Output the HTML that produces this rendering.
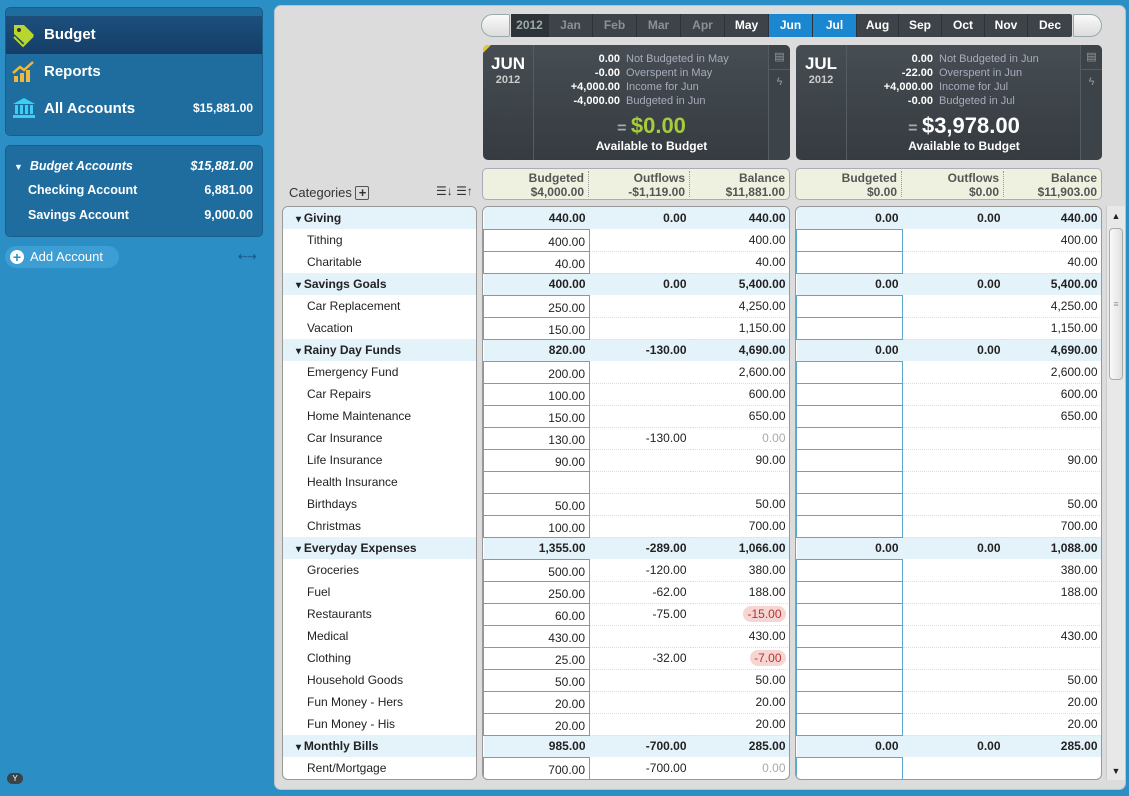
<!DOCTYPE html>
<html><head><meta charset="utf-8"><style>
*{box-sizing:border-box;margin:0;padding:0}
body{width:1129px;height:796px;overflow:hidden;background:#2b8fc5;font-family:"Liberation Sans",sans-serif;font-size:12px;color:#222;position:relative}
.abs{position:absolute}
.side1{left:5px;top:7px;width:258px;height:129px;background:#1f6d9f;border-radius:5px;border:1px solid #1a5f8c}
.nav{position:absolute;left:0;width:256px;height:37px;color:#fff;font-weight:bold;font-size:15px;line-height:37px;padding-left:38px}
.nav.sel{background:linear-gradient(#1d4f7d,#143e66);top:8px;height:38px}
.nav .amt{position:absolute;right:9px;font-size:12px}
.side2{left:5px;top:145px;width:258px;height:92px;background:#1f6d9f;border-radius:5px;border:1px solid #1a5f8c;color:#fff;font-weight:bold}
.side2 div{position:absolute;left:22px;right:9px;height:20px;line-height:20px;font-size:12.5px}
.side2 span{position:absolute;right:0}
.main{left:274px;top:5px;width:852px;height:785px;background:#dcdcdc;border-radius:7px;border:1px solid #b8c4cc}
.mb{top:14px;left:511px;width:561px;height:23px;background:#3d4348;border-radius:2px}
.mc{position:absolute;top:0;height:23px;line-height:23px;text-align:center;color:#8a9096;font-weight:bold;font-size:12px;border-right:1px solid #2d3236}
.mc.w{color:#fff}.mc.b{background:#1a87d0;color:#fff}
.arrow{top:14px;width:29px;height:23px;background:linear-gradient(#fafafa,#dcdcdc);border:1px solid #9aa;}
.sum{top:45px;height:115px;background:linear-gradient(#464d53,#353b40);border-radius:5px;color:#fff;overflow:hidden}
.sum .mo{position:absolute;left:0;top:0;width:51px;height:115px;border-right:1px solid #555d63;text-align:center}
.sum .mo b{display:block;font-size:17px;margin-top:9px}
.sum .mo i{display:block;font-style:normal;font-weight:bold;font-size:11px;color:#ccc}
.sum .ln{position:absolute;left:52px;width:85px;font-size:11px;text-align:right;white-space:nowrap}
.sum .ln b{color:#fff}.sum .ln span{position:absolute;left:91px;white-space:nowrap;color:#aab}
.sum .side{position:absolute;right:0;top:0;width:22px;height:115px;border-left:1px solid #555d63;color:#999;text-align:center;font-size:11px;background:#3d4449}
.sum .big{position:absolute;left:52px;right:22px;top:68px;text-align:center;font-size:22px;font-weight:bold}
.sum .atb{position:absolute;left:52px;right:22px;top:94px;text-align:center;font-size:12px;font-weight:bold}
.ch{top:168px;height:32px;background:#eef1df;border:1px solid #aab;border-radius:5px;color:#555;font-weight:bold;font-size:12px}
.ch div{position:absolute;top:2px;text-align:right;line-height:14px;border-right:1px dotted #999;height:26px;padding-right:4px}
.ch div:last-child{border-right:none}
.panel{top:206px;height:574px;background:#fff;border:1px solid #999;border-radius:6px;overflow:hidden}
table{border-collapse:collapse;table-layout:fixed}
td{height:22px;padding:0 4px;text-align:right;font-size:12px;white-space:nowrap;border-bottom:1px dotted #ddd}
tr.g td{background:#e4f2fa;font-weight:bold;border-bottom:none}
td.in{border:1px solid #5aa7cf;padding-top:4px}
tr.g td.in{border:none;padding-top:0}
.cat td{text-align:left;padding-left:24px;border-bottom:none}
.cat tr.g td{padding-left:13px}
.cat tr.g td:before{content:"▾ ";font-size:10px}
.gr{color:#aaa}.red span{background:#f6d6d2;color:#b33;border-radius:8px;padding:1px 4px}
</style></head><body>
<div class="abs side1">
 <div class="nav sel"><svg class="abs" style="left:5px;top:6px" width="26" height="26"><path d="M3 3h10l10 10-9 9L3 12z" fill="#b8d62e"/><circle cx="8" cy="8" r="2" fill="#333"/><path d="M3 15l9 9 10-10" stroke="#b8d62e" stroke-width="2" fill="none"/></svg>Budget</div>
 <div class="nav" style="top:45px"><svg class="abs" style="left:6px;top:7px" width="24" height="24"><rect x="2" y="16" width="4" height="6" fill="#f0b83c"/><rect x="8" y="13" width="4" height="9" fill="#f0b83c"/><rect x="14" y="10" width="4" height="12" fill="#f0b83c"/><path d="M1 13l7-6 4 3 9-8" stroke="#f0b83c" stroke-width="2.5" fill="none"/></svg>Reports</div>
 <div class="nav" style="top:82px"><svg class="abs" style="left:6px;top:7px" width="24" height="22"><path d="M12 1L1 7h22z" fill="#3ad0f5"/><rect x="3" y="8" width="3" height="9" fill="#3ad0f5"/><rect x="8" y="8" width="3" height="9" fill="#3ad0f5"/><rect x="13" y="8" width="3" height="9" fill="#3ad0f5"/><rect x="18" y="8" width="3" height="9" fill="#3ad0f5"/><rect x="1" y="18" width="22" height="3" fill="#3ad0f5"/></svg>All Accounts<span class="amt">$15,881.00</span></div>
</div>
<div class="abs side2">
 <div style="top:10px;left:8px;font-style:italic"><small style="font-size:9px">▼</small>&nbsp; Budget Accounts<span>$15,881.00</span></div>
 <div style="top:34px">Checking Account<span>6,881.00</span></div>
 <div style="top:59px">Savings Account<span>9,000.00</span></div>
</div>
<div class="abs" style="left:5px;top:246px;width:114px;height:22px;border-radius:11px;background:#3c9ed3;color:#fff;font-size:13px;line-height:22px;padding-left:25px"><span class="abs" style="left:5px;top:4px;width:14px;height:14px;border-radius:7px;background:#fff;color:#2b8fc5;font-weight:bold;line-height:14px;text-align:center;font-size:14px">+</span>Add Account</div>
<div class="abs" style="left:238px;top:250px;color:#1c5d91;font-size:11px;font-weight:bold">⇠⇢</div>
<div class="abs" style="left:7px;top:773px;width:16px;height:11px;border-radius:6px;background:#3a4348;color:#fff;font-size:8px;text-align:center;line-height:11px">Y</div>

<div class="abs main"></div>
<div class="abs arrow" style="left:481px;border-radius:12px 2px 2px 12px"></div>
<div class="abs arrow" style="left:1073px;border-radius:2px 12px 12px 2px"></div>
<div class="abs mb">
<div class="mc" style="left:0;width:38px;background:#2e3337;color:#9aa">2012</div>
<div class="mc" style="left:38px;width:44px">Jan</div><div class="mc" style="left:82px;width:44px">Feb</div><div class="mc" style="left:126px;width:44px">Mar</div><div class="mc" style="left:170px;width:44px">Apr</div><div class="mc w" style="left:214px;width:44px">May</div><div class="mc b" style="left:258px;width:44px">Jun</div><div class="mc b" style="left:302px;width:44px">Jul</div><div class="mc w" style="left:346px;width:42px">Aug</div><div class="mc w" style="left:388px;width:43px">Sep</div><div class="mc w" style="left:431px;width:43px">Oct</div><div class="mc w" style="left:474px;width:43px">Nov</div><div class="mc w" style="left:517px;width:44px;border:none">Dec</div>
</div>

<div class="abs sum" style="left:483px;width:307px">
 <div class="mo"><b>JUN</b><i>2012</i></div>
 <div class="abs" style="left:0;top:0;border-top:8px solid #e6c833;border-right:8px solid transparent"></div>
 <div class="ln" style="top:8px"><b>0.00</b><span>Not Budgeted in May</span></div>
 <div class="ln" style="top:22px"><b>-0.00</b><span>Overspent in May</span></div>
 <div class="ln" style="top:36px"><b>+4,000.00</b><span>Income for Jun</span></div>
 <div class="ln" style="top:50px"><b>-4,000.00</b><span>Budgeted in Jun</span></div>
 <div class="big"><span style="color:#aaa;font-size:16px">= </span><span style="color:#a6cc3c">$0.00</span></div>
 <div class="atb">Available to Budget</div>
 <div class="side"><div style="height:25px;line-height:25px;border-bottom:1px solid #555d63">▤</div><div style="line-height:25px">ϟ</div></div>
</div>
<div class="abs sum" style="left:796px;width:306px">
 <div class="mo"><b>JUL</b><i>2012</i></div>
 <div class="ln" style="top:8px"><b>0.00</b><span>Not Budgeted in Jun</span></div>
 <div class="ln" style="top:22px"><b>-22.00</b><span>Overspent in Jun</span></div>
 <div class="ln" style="top:36px"><b>+4,000.00</b><span>Income for Jul</span></div>
 <div class="ln" style="top:50px"><b>-0.00</b><span>Budgeted in Jul</span></div>
 <div class="big"><span style="color:#aaa;font-size:16px">= </span>$3,978.00</div>
 <div class="atb">Available to Budget</div>
 <div class="side"><div style="height:25px;line-height:25px;border-bottom:1px solid #555d63">▤</div><div style="line-height:25px">ϟ</div></div>
</div>

<div class="abs" style="left:289px;top:185px;font-size:13px;color:#333">Categories <span style="display:inline-block;width:14px;height:14px;border:1px solid #555;border-radius:2px;text-align:center;line-height:12px;font-weight:bold">+</span></div>
<div class="abs" style="left:436px;top:184px;font-size:12px;color:#333">☰↓ ☰↑</div>

<div class="abs ch" style="left:482px;width:308px"><div style="left:0;width:106px">Budgeted<br>$4,000.00</div><div style="left:106px;width:101px">Outflows<br>-$1,119.00</div><div style="left:207px;width:99px">Balance<br>$11,881.00</div></div>
<div class="abs ch" style="left:795px;width:307px"><div style="left:0;width:106px">Budgeted<br>$0.00</div><div style="left:106px;width:102px">Outflows<br>$0.00</div><div style="left:208px;width:97px">Balance<br>$11,903.00</div></div>

<div class="abs panel" style="left:282px;width:195px"><table class="cat" style="width:193px">
<tr class="g"><td>Giving</td></tr><tr><td>Tithing</td></tr><tr><td>Charitable</td></tr>
<tr class="g"><td>Savings Goals</td></tr><tr><td>Car Replacement</td></tr><tr><td>Vacation</td></tr>
<tr class="g"><td>Rainy Day Funds</td></tr><tr><td>Emergency Fund</td></tr><tr><td>Car Repairs</td></tr><tr><td>Home Maintenance</td></tr><tr><td>Car Insurance</td></tr><tr><td>Life Insurance</td></tr><tr><td>Health Insurance</td></tr><tr><td>Birthdays</td></tr><tr><td>Christmas</td></tr>
<tr class="g"><td>Everyday Expenses</td></tr><tr><td>Groceries</td></tr><tr><td>Fuel</td></tr><tr><td>Restaurants</td></tr><tr><td>Medical</td></tr><tr><td>Clothing</td></tr><tr><td>Household Goods</td></tr><tr><td>Fun Money - Hers</td></tr><tr><td>Fun Money - His</td></tr>
<tr class="g"><td>Monthly Bills</td></tr><tr><td>Rent/Mortgage</td></tr>
</table></div>

<div class="abs panel" style="left:482px;width:308px"><table style="width:306px"><col style="width:106px"><col style="width:101px"><col style="width:99px">
<tr class="g"><td class="in">440.00</td><td>0.00</td><td>440.00</td></tr>
<tr><td class="in">400.00</td><td></td><td>400.00</td></tr>
<tr><td class="in">40.00</td><td></td><td>40.00</td></tr>
<tr class="g"><td class="in">400.00</td><td>0.00</td><td>5,400.00</td></tr>
<tr><td class="in">250.00</td><td></td><td>4,250.00</td></tr>
<tr><td class="in">150.00</td><td></td><td>1,150.00</td></tr>
<tr class="g"><td class="in">820.00</td><td>-130.00</td><td>4,690.00</td></tr>
<tr><td class="in">200.00</td><td></td><td>2,600.00</td></tr>
<tr><td class="in">100.00</td><td></td><td>600.00</td></tr>
<tr><td class="in">150.00</td><td></td><td>650.00</td></tr>
<tr><td class="in">130.00</td><td>-130.00</td><td class="gr">0.00</td></tr>
<tr><td class="in">90.00</td><td></td><td>90.00</td></tr>
<tr><td class="in"></td><td></td><td></td></tr>
<tr><td class="in">50.00</td><td></td><td>50.00</td></tr>
<tr><td class="in">100.00</td><td></td><td>700.00</td></tr>
<tr class="g"><td class="in">1,355.00</td><td>-289.00</td><td>1,066.00</td></tr>
<tr><td class="in">500.00</td><td>-120.00</td><td>380.00</td></tr>
<tr><td class="in">250.00</td><td>-62.00</td><td>188.00</td></tr>
<tr><td class="in">60.00</td><td>-75.00</td><td class="red"><span>-15.00</span></td></tr>
<tr><td class="in">430.00</td><td></td><td>430.00</td></tr>
<tr><td class="in">25.00</td><td>-32.00</td><td class="red"><span>-7.00</span></td></tr>
<tr><td class="in">50.00</td><td></td><td>50.00</td></tr>
<tr><td class="in">20.00</td><td></td><td>20.00</td></tr>
<tr><td class="in">20.00</td><td></td><td>20.00</td></tr>
<tr class="g"><td class="in">985.00</td><td>-700.00</td><td>285.00</td></tr>
<tr><td class="in">700.00</td><td>-700.00</td><td class="gr">0.00</td></tr>
</table></div>

<div class="abs panel" style="left:795px;width:307px"><table style="width:305px"><col style="width:106px"><col style="width:102px"><col style="width:97px">
<tr class="g"><td class="in">0.00</td><td>0.00</td><td>440.00</td></tr>
<tr><td class="in"></td><td></td><td>400.00</td></tr>
<tr><td class="in"></td><td></td><td>40.00</td></tr>
<tr class="g"><td class="in">0.00</td><td>0.00</td><td>5,400.00</td></tr>
<tr><td class="in"></td><td></td><td>4,250.00</td></tr>
<tr><td class="in"></td><td></td><td>1,150.00</td></tr>
<tr class="g"><td class="in">0.00</td><td>0.00</td><td>4,690.00</td></tr>
<tr><td class="in"></td><td></td><td>2,600.00</td></tr>
<tr><td class="in"></td><td></td><td>600.00</td></tr>
<tr><td class="in"></td><td></td><td>650.00</td></tr>
<tr><td class="in"></td><td></td><td></td></tr>
<tr><td class="in"></td><td></td><td>90.00</td></tr>
<tr><td class="in"></td><td></td><td></td></tr>
<tr><td class="in"></td><td></td><td>50.00</td></tr>
<tr><td class="in"></td><td></td><td>700.00</td></tr>
<tr class="g"><td class="in">0.00</td><td>0.00</td><td>1,088.00</td></tr>
<tr><td class="in"></td><td></td><td>380.00</td></tr>
<tr><td class="in"></td><td></td><td>188.00</td></tr>
<tr><td class="in"></td><td></td><td></td></tr>
<tr><td class="in"></td><td></td><td>430.00</td></tr>
<tr><td class="in"></td><td></td><td></td></tr>
<tr><td class="in"></td><td></td><td>50.00</td></tr>
<tr><td class="in"></td><td></td><td>20.00</td></tr>
<tr><td class="in"></td><td></td><td>20.00</td></tr>
<tr class="g"><td class="in">0.00</td><td>0.00</td><td>285.00</td></tr>
<tr><td class="in"></td><td></td><td></td></tr>
</table></div>

<div class="abs" style="left:1106px;top:206px;width:19px;height:574px;background:#e8e8e8;border-left:1px solid #ccc">
 <div style="text-align:center;font-size:9px;margin-top:5px">▲</div>
 <div class="abs" style="left:2px;top:22px;width:14px;height:152px;border:1px solid #aaa;border-radius:4px;background:linear-gradient(90deg,#fafafa,#e0e0e0);text-align:center;line-height:150px;color:#999;font-size:9px">≡</div>
 <div class="abs" style="left:0;bottom:4px;width:18px;text-align:center;font-size:9px">▼</div>
</div>
</body></html>
